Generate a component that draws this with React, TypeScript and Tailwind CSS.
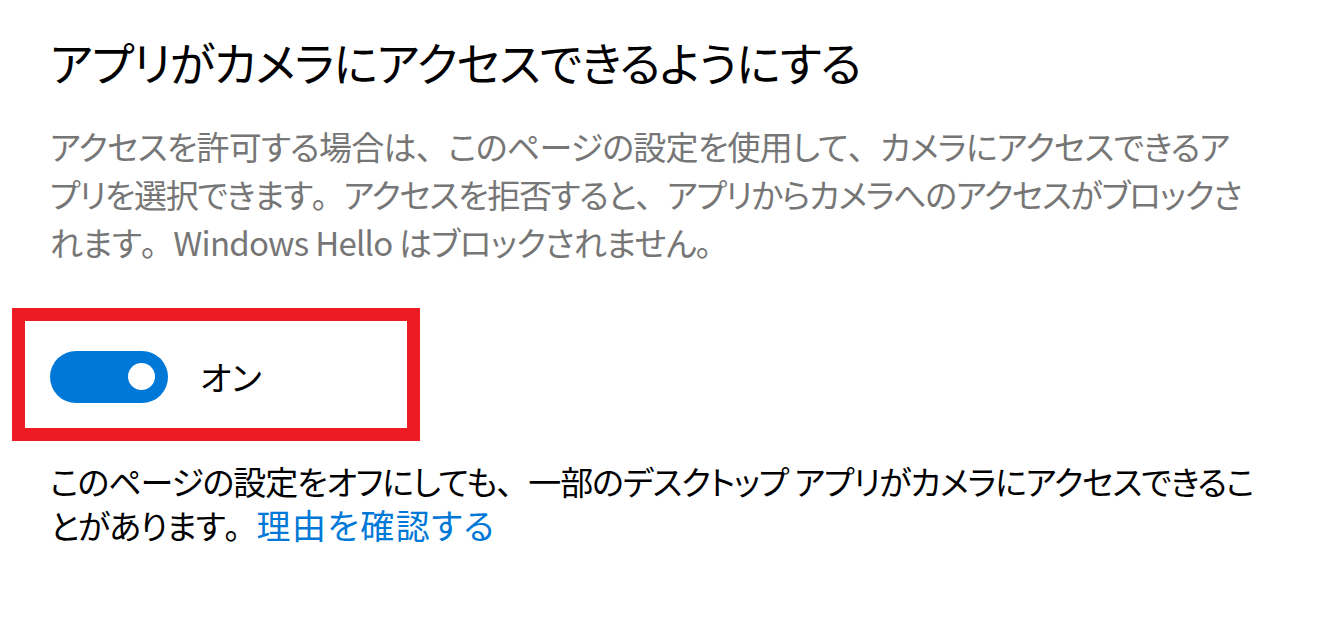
import React from "react";

const jp = "font-['Noto_Sans_CJK_JP','Noto_Sans',sans-serif] [font-feature-settings:'palt']";

// full-width punctuation like the Windows UI font
function P({ c }: { c: string }) {
  return <span className="[font-feature-settings:normal]">{c}</span>;
}

export default function App() {
  return (
    <div className={`w-[1344px] h-[617px] bg-white overflow-hidden pl-[50px] pt-[29px] ${jp}`}>
      <h1 className="text-[46px] leading-[64px] font-normal text-black whitespace-nowrap tracking-[-1px]">
        アプリがカメラにアクセスできるようにする
      </h1>

      <p className="mt-[29px] text-[33px] leading-[48px] text-[#767676] whitespace-nowrap tracking-[-0.75px]">
        アクセスを許可する場合は<P c="、" />このページの設定を使用して<P c="、" />カメラにアクセスできるア
        <br />
        <span className="tracking-[-1.3px]">
          プリを選択できます<P c="。" />アクセスを拒否すると<P c="、" />アプリからカメラへのアクセスがブロックさ
        </span>
        <br />
        れます<P c="。" />Windows Hello はブロックされません<P c="。" />
      </p>

      {/* highlighted toggle */}
      <div className="mt-[42px] -ml-[38px] w-[408px] h-[133px] border-[13px] border-[#ed1c24] pl-[25px] pt-[30px]">
        <div className="flex items-center gap-[32px]">
          <button className="relative w-[118px] h-[52px] rounded-full bg-[#0078d7]">
            <span className="absolute right-[13px] top-[12px] w-[27px] h-[27px] rounded-full bg-white" />
          </button>
          <span className="text-[34px] leading-none text-black">オン</span>
        </div>
      </div>

      <div className="mt-[18px] text-[33px] text-black whitespace-nowrap tracking-[-1.1px]">
        <div className="h-[44px] leading-[44px]">
          このページの設定をオフにしても<P c="、" />一部のデスクトップ アプリがカメラにアクセスできるこ
        </div>
        <div className="h-[44px] leading-[44px]">
          とがあります<P c="。" />
          <a href="#" className="text-[34px] leading-[44px] tracking-[1.5px] text-[#0078d7]">
            理由を確認する
          </a>
        </div>
      </div>
    </div>
  );
}
